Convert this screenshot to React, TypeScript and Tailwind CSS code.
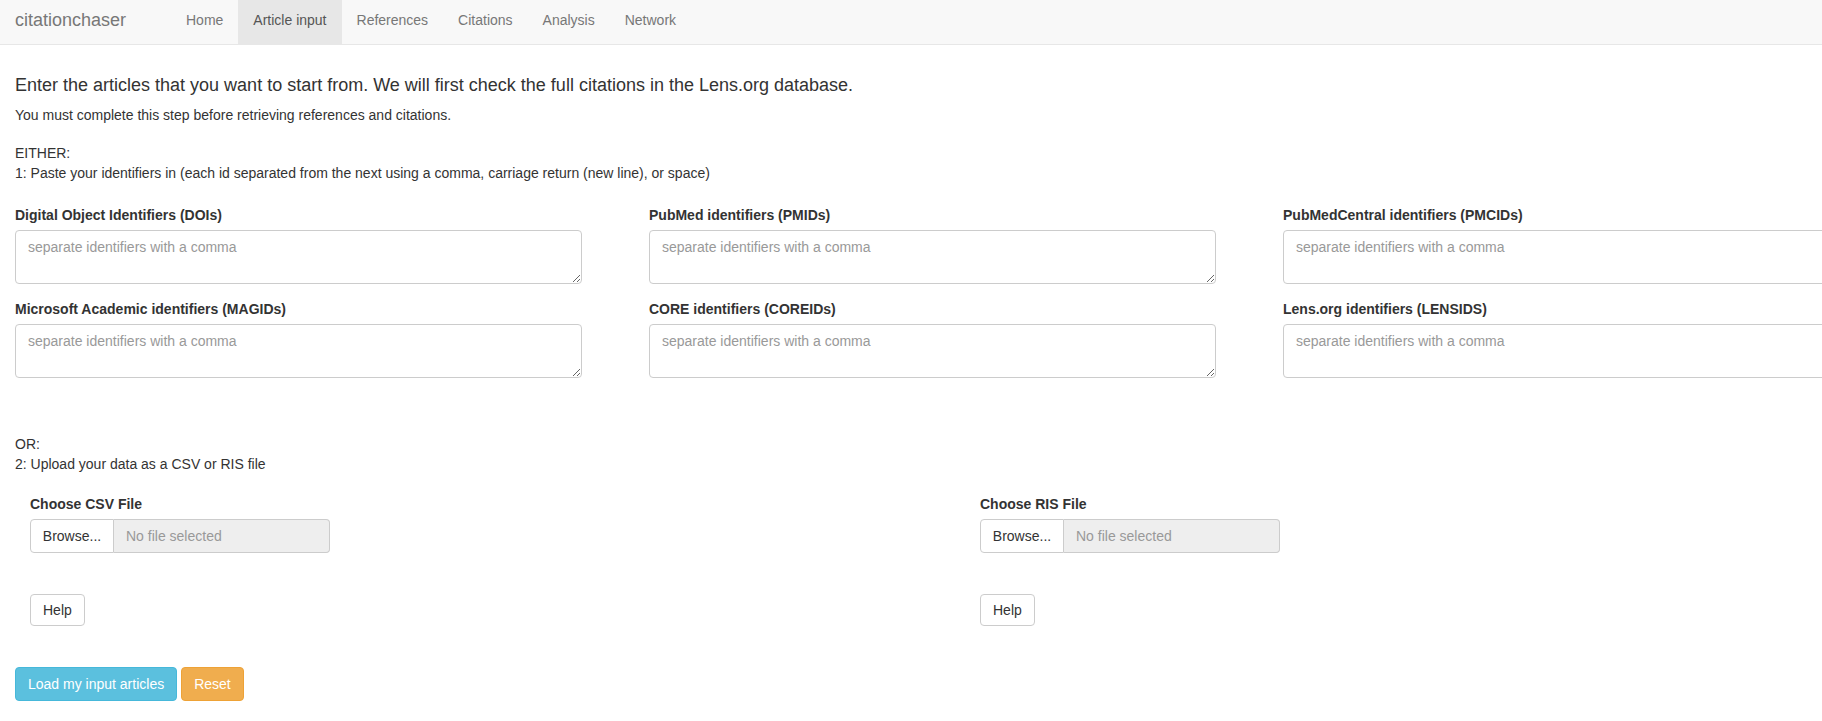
import React from 'react'

const navItems = ['Home', 'Article input', 'References', 'Citations', 'Analysis', 'Network']

const idFields = [
  'Digital Object Identifiers (DOIs)',
  'PubMed identifiers (PMIDs)',
  'PubMedCentral identifiers (PMCIDs)',
  'Microsoft Academic identifiers (MAGIDs)',
  'CORE identifiers (COREIDs)',
  'Lens.org identifiers (LENSIDS)',
]

function Navbar() {
  return (
    <nav className="flex h-[45px] items-stretch border-b border-[#e7e7e7] bg-[#f8f8f8]">
      <div className="flex w-[171px] items-center pb-[5px] pl-[15px] text-[18px] text-[#777]">
        citationchaser
      </div>
      {navItems.map((item) => (
        <div
          key={item}
          className={`flex items-center px-[15px] pb-[5px] ${
            item === 'Article input' ? 'bg-[#e7e7e7] text-[#555]' : 'text-[#777]'
          }`}
        >
          {item}
        </div>
      ))}
    </nav>
  )
}

function FileInput({ label }: { label: string }) {
  return (
    <div className="w-[300px]">
      <div className="mb-[5px] font-bold">{label}</div>
      <div className="flex h-[34px]">
        <div className="flex w-[84px] items-center justify-center rounded-l-[4px] border border-[#ccc] bg-white text-[#333]">
          Browse...
        </div>
        <div className="flex flex-1 items-center rounded-r-[4px] border border-l-0 border-[#ccc] bg-[#eee] px-[12px] text-[#999]">
          No file selected
        </div>
      </div>
      <button className="mt-[41px] h-[32px] rounded-[4px] border border-[#ccc] bg-white px-[12px] text-[#333]">
        Help
      </button>
    </div>
  )
}

export default function App() {
  return (
    <div className="min-h-screen overflow-hidden bg-white font-['Liberation_Sans',Arial,sans-serif] text-[14px] leading-[20px] text-[#333]">
      <Navbar />
      <main className="px-[15px]">
        <h4 className="mt-[30px] text-[18px] leading-[20px]">
          Enter the articles that you want to start from. We will first check the full citations in the Lens.org database.
        </h4>
        <p className="mt-[10px]">You must complete this step before retrieving references and citations.</p>
        <p className="mt-[18px]">
          EITHER:
          <br />
          1: Paste your identifiers in (each id separated from the next using a comma, carriage return (new line), or space)
        </p>

        <div className="mt-[22px] grid w-[1835px] grid-cols-[567px_567px_567px] gap-x-[67px] gap-y-[15px]">
          {idFields.map((field) => (
            <div key={field}>
              <label className="mb-[5px] block font-bold">{field}</label>
              <textarea
                className="block h-[54px] w-full rounded-[4px] border border-[#ccc] px-[12px] py-[6px] text-[14px] text-[#555] placeholder:text-[#999]"
                placeholder="separate identifiers with a comma"
              />
            </div>
          ))}
        </div>

        <p className="mt-[56px]">
          OR:
          <br />
          2: Upload your data as a CSV or RIS file
        </p>

        <div className="mt-[20px] flex pl-[15px]">
          <div className="w-[950px]">
            <FileInput label="Choose CSV File" />
          </div>
          <FileInput label="Choose RIS File" />
        </div>

        <div className="mt-[41px] flex gap-[4px]">
          <button className="h-[34px] rounded-[4px] border border-[#46b8da] bg-[#5bc0de] px-[12px] text-white">
            Load my input articles
          </button>
          <button className="h-[34px] rounded-[4px] border border-[#eea236] bg-[#f0ad4e] px-[12px] text-white">
            Reset
          </button>
        </div>
      </main>
    </div>
  )
}
